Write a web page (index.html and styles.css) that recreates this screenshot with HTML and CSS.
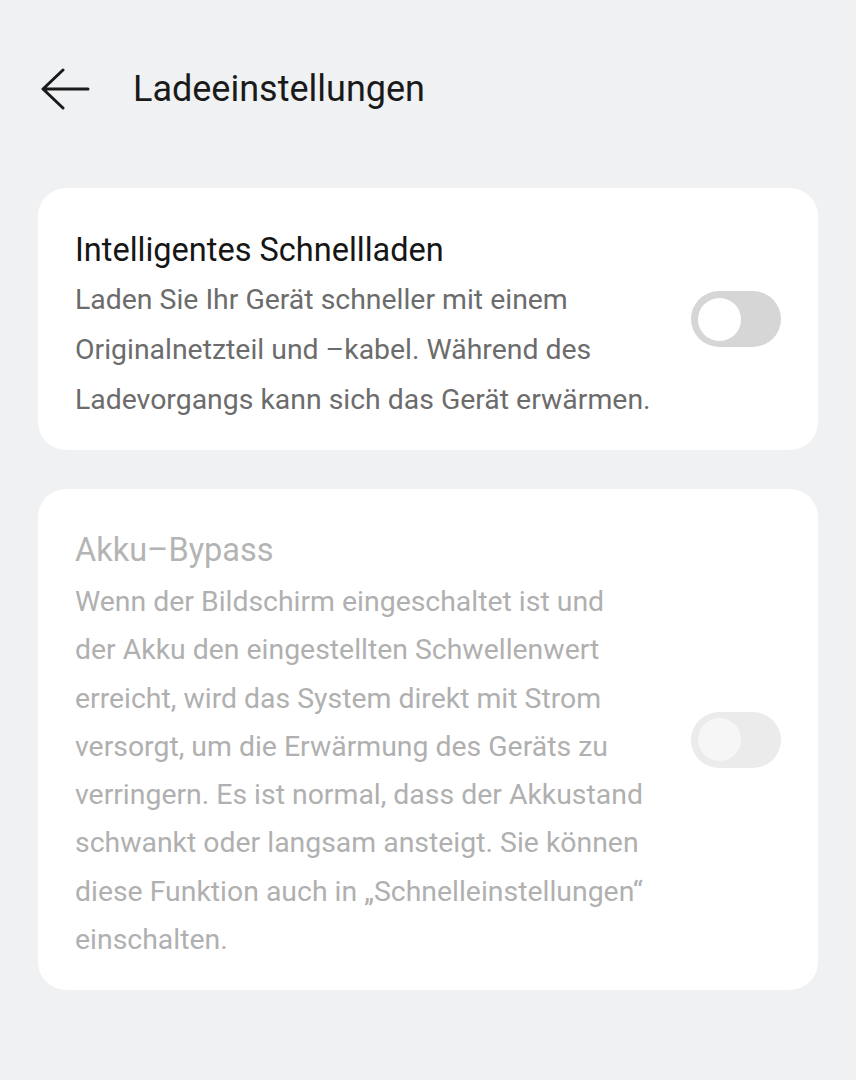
FILE: index.html
```html
<!DOCTYPE html>
<html>
<head>
  <meta charset="utf-8">
  <link rel="stylesheet" href="styles.css">
</head>
<body>
  <div class="header">
    <svg class="back-icon" width="50" height="42" viewBox="0 0 50 42">
      <path d="M23 2 L3 21 L23 40 M3 21 L48 21" fill="none" stroke="#1a1a1a" stroke-width="3" stroke-linecap="round" stroke-linejoin="round"/>
    </svg>
    <h1>Ladeeinstellungen</h1>
  </div>

  <div class="card">
    <div class="card-text">
      <div class="card-title">Intelligentes Schnellladen</div>
      <div class="card-desc">Laden Sie Ihr Gerät schneller mit einem<br>Originalnetzteil und –kabel. Während des<br>Ladevorgangs kann sich das Gerät erwärmen.</div>
    </div>
    <div class="switch"><div class="knob"></div></div>
  </div>

  <div class="card disabled">
    <div class="card-text">
      <div class="card-title">Akku–Bypass</div>
      <div class="card-desc">Wenn der Bildschirm eingeschaltet ist und<br>der Akku den eingestellten Schwellenwert<br>erreicht, wird das System direkt mit Strom<br>versorgt, um die Erwärmung des Geräts zu<br>verringern. Es ist normal, dass der Akkustand<br>schwankt oder langsam ansteigt. Sie können<br>diese Funktion auch in „Schnelleinstellungen“<br>einschalten.</div>
    </div>
    <div class="switch"><div class="knob"></div></div>
  </div>
</body>
</html>
```

FILE: styles.css
```css
body {
  margin: 0;
  padding: 0 38px;
  background: #f0f1f3;
  font-family: Roboto, 'Noto Sans', sans-serif;
  color: #1a1a1a;
}

.header {
  display: flex;
  align-items: center;
  height: 180px;
  padding-left: 2px;
  padding-bottom: 2px;
  box-sizing: border-box;
}

.back-icon {
  margin-right: 43px;
}

.header h1 {
  margin: 0;
  font-size: 36px;
  font-weight: 400;
}

.card {
  display: flex;
  align-items: center;
  justify-content: space-between;
  background: #ffffff;
  border-radius: 28px;
  padding: 31px 37px;
  margin-top: 8px;
  margin-bottom: 39px;
}

.card + .card {
  margin-top: 0;
}

.card-text {
  margin-top: 6px;
  margin-bottom: -6px;
}

.card-title {
  font-size: 32.5px;
  line-height: 50px;
  color: #161616;
}

.card-desc {
  font-size: 28.4px;
  line-height: 50px;
  color: #6c6c6c;
}

.disabled .card-text {
  margin-top: 5px;
  margin-bottom: -5px;
}

.disabled .card-title {
  color: #b4b4b4;
  margin-bottom: 3px;
}

.disabled .card-desc {
  color: #b0b0b0;
  line-height: 48.3px;
}

.switch {
  width: 90px;
  height: 56px;
  border-radius: 28px;
  background: #d6d6d6;
  display: flex;
  align-items: center;
  padding-left: 7px;
  box-sizing: border-box;
  flex-shrink: 0;
}

.knob {
  width: 43px;
  height: 43px;
  border-radius: 50%;
  background: #ffffff;
}

.disabled .switch {
  background: #ebebeb;
}

.disabled .knob {
  background: #f6f6f6;
}
```
